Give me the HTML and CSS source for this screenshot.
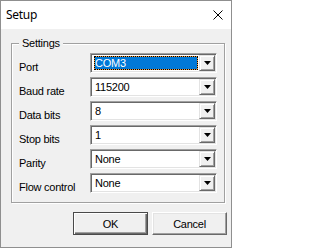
FILE: index.html
```html
<!DOCTYPE html>
<html>
<head>
<meta charset="utf-8">
<title>Setup</title>
<link rel="stylesheet" href="styles.css">
</head>
<body>
<div class="dialog">
  <div class="titlebar">
    <span class="title">Setup</span>
    <svg class="close" width="10" height="10" viewBox="0 0 10 10"><path d="M0.5 0.5L9.5 9.5M9.5 0.5L0.5 9.5" stroke="#000" stroke-width="1" fill="none"/></svg>
  </div>
  <div class="client">
    <fieldset class="group">
      <legend>Settings</legend>
      <div class="grid">
        <div class="lbl">Port</div>
        <div class="combo"><div class="field"><span class="val sel">COM3</span></div><div class="drop"><svg width="7" height="4" viewBox="0 0 7 4"><path d="M0 0H7L3.5 4Z" fill="#000"/></svg></div></div>
        <div class="lbl">Baud rate</div>
        <div class="combo"><div class="field"><span class="val">115200</span></div><div class="drop"><svg width="7" height="4" viewBox="0 0 7 4"><path d="M0 0H7L3.5 4Z" fill="#000"/></svg></div></div>
        <div class="lbl">Data bits</div>
        <div class="combo"><div class="field"><span class="val">8</span></div><div class="drop"><svg width="7" height="4" viewBox="0 0 7 4"><path d="M0 0H7L3.5 4Z" fill="#000"/></svg></div></div>
        <div class="lbl">Stop bits</div>
        <div class="combo"><div class="field"><span class="val">1</span></div><div class="drop"><svg width="7" height="4" viewBox="0 0 7 4"><path d="M0 0H7L3.5 4Z" fill="#000"/></svg></div></div>
        <div class="lbl">Parity</div>
        <div class="combo"><div class="field"><span class="val">None</span></div><div class="drop"><svg width="7" height="4" viewBox="0 0 7 4"><path d="M0 0H7L3.5 4Z" fill="#000"/></svg></div></div>
        <div class="lbl">Flow control</div>
        <div class="combo"><div class="field"><span class="val">None</span></div><div class="drop"><svg width="7" height="4" viewBox="0 0 7 4"><path d="M0 0H7L3.5 4Z" fill="#000"/></svg></div></div>
      </div>
    </fieldset>
    <div class="buttons">
      <button class="btn default">OK</button>
      <button class="btn">Cancel</button>
    </div>
  </div>
</div>
</body>
</html>
```

FILE: styles.css
```css
html, body {
  margin: 0;
  background: #fff;
}
body {
  font-family: "Liberation Sans", Arial, sans-serif;
  font-size: 11px;
  letter-spacing: -0.25px;
  color: #000;
}
.dialog {
  width: 232px;
  height: 248px;
  box-sizing: border-box;
  border: 1px solid #8f8f8f;
  display: flex;
  flex-direction: column;
  background: #f0f0f0;
}
.titlebar {
  height: 28px;
  flex: none;
  background: #fff;
  display: flex;
  align-items: center;
  justify-content: space-between;
  padding: 0 8px 0 5px;
}
.title {
  font-family: "Noto Sans", "Open Sans", sans-serif;
  font-size: 12px;
  line-height: 28px;
  letter-spacing: -0.3px;
}
.close {
  display: block;
}
.client {
  flex: 1;
  display: flex;
  flex-direction: column;
  padding: 8px 0 0 10px;
}
.group {
  margin: 0 6px 0 0;
  padding: 3px 7px 9px 7px;
  border: 1px solid #a0a0a0;
  box-shadow: inset 1px 1px #fff, 1px 1px #fff;
  min-width: 0;
}
.group legend {
  padding: 0 3px;
  margin: 0;
  line-height: 13px;
  background: #f0f0f0;
}
.grid {
  display: grid;
  grid-template-columns: 71px 127px;
  grid-auto-rows: 20px;
  row-gap: 4px;
}
.lbl {
  line-height: 12px;
  padding-top: 8px;
  white-space: nowrap;
}
.combo {
  height: 20px;
  box-sizing: border-box;
  border: 1px solid;
  border-color: #a0a0a0 #fff #fff #a0a0a0;
  box-shadow: inset 1px 1px #696969, inset -1px -1px #e3e3e3;
  padding: 1px;
  background: #fff;
  display: flex;
}
.field {
  flex: 1;
  min-width: 0;
  display: flex;
  flex-direction: column;
}
.val {
  display: block;
  margin: 1px 1px 1px 2px;
  padding-left: 1px;
  line-height: 14px;
  white-space: nowrap;
}
.sel {
  background: #0078d7;
  color: #fff;
  outline: 1px dotted #000;
  outline-offset: -1px;
  box-shadow: inset 0 0 0 1px #f29b3c;
}
.drop {
  width: 16px;
  flex: none;
  box-sizing: border-box;
  border: 1px solid;
  border-color: #e3e3e3 #696969 #696969 #e3e3e3;
  box-shadow: inset 1px 1px #fff, inset -1px -1px #a0a0a0;
  background: #f0f0f0;
  display: flex;
  align-items: center;
  justify-content: center;
}
.drop svg {
  display: block;
}
.buttons {
  display: flex;
  justify-content: flex-end;
  gap: 4px;
  margin-top: 9px;
  padding-right: 4px;
}
.btn {
  width: 75px;
  height: 23px;
  box-sizing: border-box;
  padding: 0;
  font: inherit;
  letter-spacing: inherit;
  color: #000;
  background: #f0f0f0;
  border: 1px solid;
  border-color: #fff #696969 #696969 #fff;
  box-shadow: inset -1px -1px #a0a0a0, inset 1px 1px #e3e3e3;
}
.btn.default {
  border-color: #4a4a4a;
  box-shadow: inset 1px 1px #fff, inset -1px -1px #696969, inset -2px -2px #a0a0a0;
}
```
